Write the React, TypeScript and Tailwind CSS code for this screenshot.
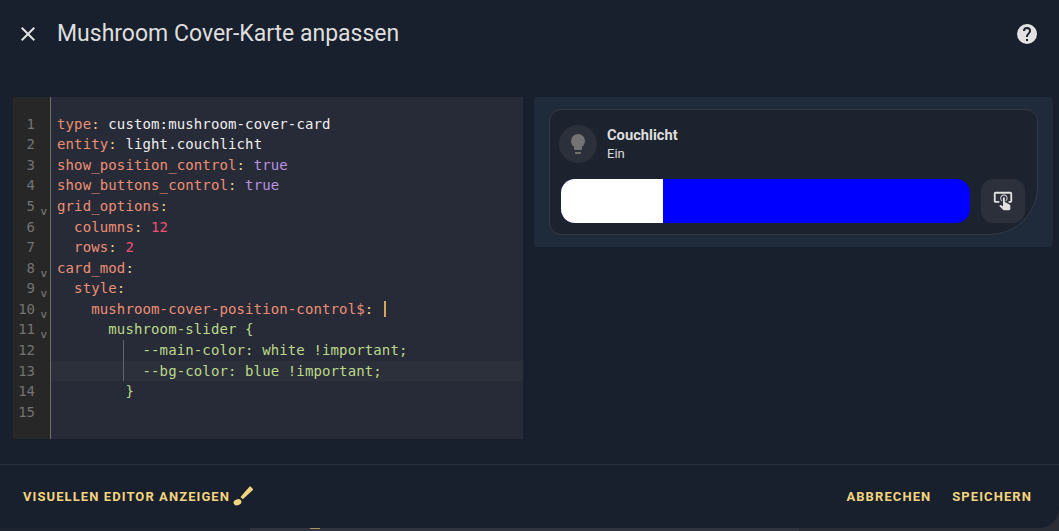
import React from "react";

const K = "text-[#ee8f74]";
const C = "text-[#e9cf8a]";
const P = "text-[#efefef]";
const G = "text-[#bcd98a]";
const V = "text-[#bb92e0]";
const N = "text-[#f04f74]";

type Seg = [string, string];
const lines: { n: number; fold?: boolean; segs: Seg[]; guide?: boolean; active?: boolean; cursor?: boolean }[] = [
  { n: 1, segs: [[K, "type"], [C, ":"], [P, " custom:mushroom-cover-card"]] },
  { n: 2, segs: [[K, "entity"], [C, ":"], [P, " light.couchlicht"]] },
  { n: 3, segs: [[K, "show_position_control"], [C, ":"], [V, " true"]] },
  { n: 4, segs: [[K, "show_buttons_control"], [C, ":"], [V, " true"]] },
  { n: 5, fold: true, segs: [[K, "grid_options"], [C, ":"]] },
  { n: 6, segs: [[K, "  columns"], [C, ":"], [N, " 12"]] },
  { n: 7, segs: [[K, "  rows"], [C, ":"], [N, " 2"]] },
  { n: 8, fold: true, segs: [[K, "card_mod"], [C, ":"]] },
  { n: 9, fold: true, segs: [[K, "  style"], [C, ":"]] },
  { n: 10, fold: true, cursor: true, segs: [[K, "    mushroom-cover-position-control$"], [C, ":"], [P, " "]] },
  { n: 11, fold: true, segs: [[G, "      mushroom-slider {"]] },
  { n: 12, guide: true, segs: [[G, "          --main-color: white !important;"]] },
  { n: 13, guide: true, active: true, segs: [[G, "          --bg-color: blue !important;"]] },
  { n: 14, segs: [[G, "        }"]] },
  { n: 15, segs: [[P, ""]] },
];

function CodeLine({ l }: { l: (typeof lines)[number] }) {
  return (
    <div className="flex h-[20.58px] leading-[20.58px]">
      <div className="relative w-[37px] shrink-0 pr-[15px] text-right text-[#737373]">
        {l.n}
        {l.fold && (
          <span className="absolute right-[3px] top-[6px] text-[11px] text-[#808080]">v</span>
        )}
      </div>
      <div className="w-px shrink-0 bg-[#6f6f6a]" />
      <div className={`relative flex-1 whitespace-pre pl-[6px] tracking-[0.12px] ${l.active ? "bg-[#2c303b]" : ""}`}>
        {l.guide && <span className="absolute left-[72px] top-0 h-full w-px bg-[#62646b]" />}
        {l.segs.map((s, i) => (
          <span key={i} className={s[0]}>{s[1]}</span>
        ))}
        {l.cursor && <span className="ml-[2px] inline-block h-[16px] w-[2px] align-[-3px] bg-[#d9a35c]" />}
      </div>
    </div>
  );
}

export default function App() {
  return (
    <div className="flex h-[531px] w-[1059px] flex-col overflow-hidden bg-[#2a2d36] font-['Roboto',sans-serif]">
      <div className="flex h-[528px] shrink-0 flex-col rounded-br-[20px] bg-[#19202d]">
        <header className="flex h-[67px] items-center pl-[16px] pr-[20px] text-[#e1e1e1]">
          <svg width="24" height="24" viewBox="0 0 24 24" fill="currentColor">
            <path d="M19 6.41 17.59 5 12 10.59 6.41 5 5 6.41 10.59 12 5 17.59 6.41 19 12 13.41 17.59 19 19 17.59 13.41 12z" />
          </svg>
          <h1 className="ml-[17px] flex-1 text-[23px] font-normal leading-none text-[#dedede]">Mushroom Cover-Karte anpassen</h1>
          <svg width="24" height="24" viewBox="0 0 24 24" fill="currentColor">
            <path d="M15.07 11.25l-.9.92C13.45 12.89 13 13.5 13 15h-2v-.5c0-1.11.45-2.11 1.17-2.83l1.24-1.26c.37-.36.59-.86.59-1.41a2 2 0 0 0-2-2 2 2 0 0 0-2 2H8a4 4 0 0 1 4-4 4 4 0 0 1 4 4c0 .88-.36 1.67-.93 2.25M13 19h-2v-2h2M12 2A10 10 0 0 0 2 12a10 10 0 0 0 10 10 10 10 0 0 0 10-10c0-5.53-4.5-10-10-10z" />
          </svg>
        </header>

        <main className="mt-[30px] flex flex-1 items-start pl-[13px] pr-[6px]">
          <div className="flex h-[342px] w-[510px] shrink-0 flex-col bg-[#272b37] font-['DejaVu_Sans_Mono',monospace] text-[14px]">
            <div className="relative flex flex-1 flex-col pt-[16.7px]">
              <div className="absolute inset-y-0 left-0 w-[37px] bg-[#272727]" />
              <div className="absolute inset-y-0 left-[37px] w-px bg-[#6f6f6a]" />
              <div className="relative">
                {lines.map((l) => (
                  <CodeLine key={l.n} l={l} />
                ))}
              </div>
            </div>
          </div>

          <div className="ml-[11px] flex-1 rounded-[4px] bg-[#1f2a3a] px-[15px] py-[12px]">
            <div className="h-[126px] rounded-[12px] rounded-br-[48px] border border-[#353a44] bg-[#1d232e] px-[11px] pt-[15px]">
              <div className="flex items-center">
                <div className="flex h-[38px] w-[38px] -translate-x-[2px] items-center justify-center rounded-full bg-[#2c303a] text-[#737373]">
                  <svg width="24" height="24" viewBox="0 0 24 24" fill="currentColor">
                    <path d="M12,2A7,7 0 0,0 5,9C5,11.38 6.19,13.47 8,14.74V17A1,1 0 0,0 9,18H15A1,1 0 0,0 16,17V14.74C17.81,13.47 19,11.38 19,9A7,7 0 0,0 12,2M9,21A1,1 0 0,0 10,22H14A1,1 0 0,0 15,21V20H9V21Z" />
                  </svg>
                </div>
                <div className="ml-[8px] -translate-y-[1px]">
                  <div className="text-[14.7px] font-bold leading-[20px] text-[#dedede]">Couchlicht</div>
                  <div className="text-[13px] leading-[17px] text-[#dedede]">Ein</div>
                </div>
              </div>
              <div className="mt-[16px] flex items-center">
                <div className="flex h-[44px] w-[409px] overflow-hidden rounded-[14px] bg-[#0000ff]">
                  <div className="w-[102px] bg-white" />
                </div>
                <div className="ml-[11px] flex h-[44px] w-[44px] items-center justify-center rounded-[12px] bg-[#2c303a] text-[#e1e1e1]">
                  <svg width="22" height="22" viewBox="0 0 24 24" fill="currentColor">
                    <path d="M13 5C15.21 5 17 6.79 17 9C17 10.5 16.2 11.77 15 12.46V11.24C15.61 10.69 16 9.89 16 9C16 7.34 14.66 6 13 6S10 7.34 10 9C10 9.89 10.39 10.69 11 11.24V12.46C9.8 11.77 9 10.5 9 9C9 6.79 10.79 5 13 5M20 20.5C19.97 21.32 19.32 21.97 18.5 22H13C12.62 22 12.26 21.85 12 21.57L8 17.37L8.74 16.6C8.93 16.39 9.2 16.28 9.5 16.28H9.7L12 18V9C12 8.45 12.45 8 13 8S14 8.45 14 9V13.47L15.21 13.6L19.15 15.79C19.68 16.03 20 16.56 20 17.14V20.5M20 2H4C2.9 2 2 2.9 2 4V12C2 13.11 2.9 14 4 14H8V12L4 12L4 4H20L20 12H18V14H20V13.96L20.04 14C21.13 14 22 13.09 22 12V4C22 2.9 21.11 2 20 2Z" />
                  </svg>
                </div>
              </div>
            </div>
          </div>
        </main>

        <footer className="flex h-[64px] items-center border-t border-[#2e323d] pl-[23px] pr-[27px] text-[13px] font-bold tracking-[1.08px] text-[#f3d57f]">
          <span>VISUELLEN EDITOR ANZEIGEN</span>
          <svg className="ml-[1px]" width="24" height="24" viewBox="0 0 24 24" fill="currentColor">
            <path d="M19.6 1.6l2.3 2.3a.9.9 0 0 1 0 1.2L11.8 14.2 9.5 11.9l8.9-10.2a.9.9 0 0 1 1.2-.1z" />
            <ellipse cx="6.5" cy="17.2" rx="4" ry="3" transform="rotate(-20 6.5 17.2)" />
          </svg>
          <span className="ml-auto">ABBRECHEN</span>
          <span className="ml-[21px]">SPEICHERN</span>
        </footer>
      </div>
      <div className="flex h-[3px] w-full bg-[#1f2530]">
        <div className="w-[250px]" />
        <div className="flex flex-1 bg-[#30343f]">
          <div className="ml-[60px] h-[1px] w-[10px] bg-[#a8915a]" />
        </div>
        <div className="w-[260px] bg-[#2a2d36]" />
      </div>
    </div>
  );
}
